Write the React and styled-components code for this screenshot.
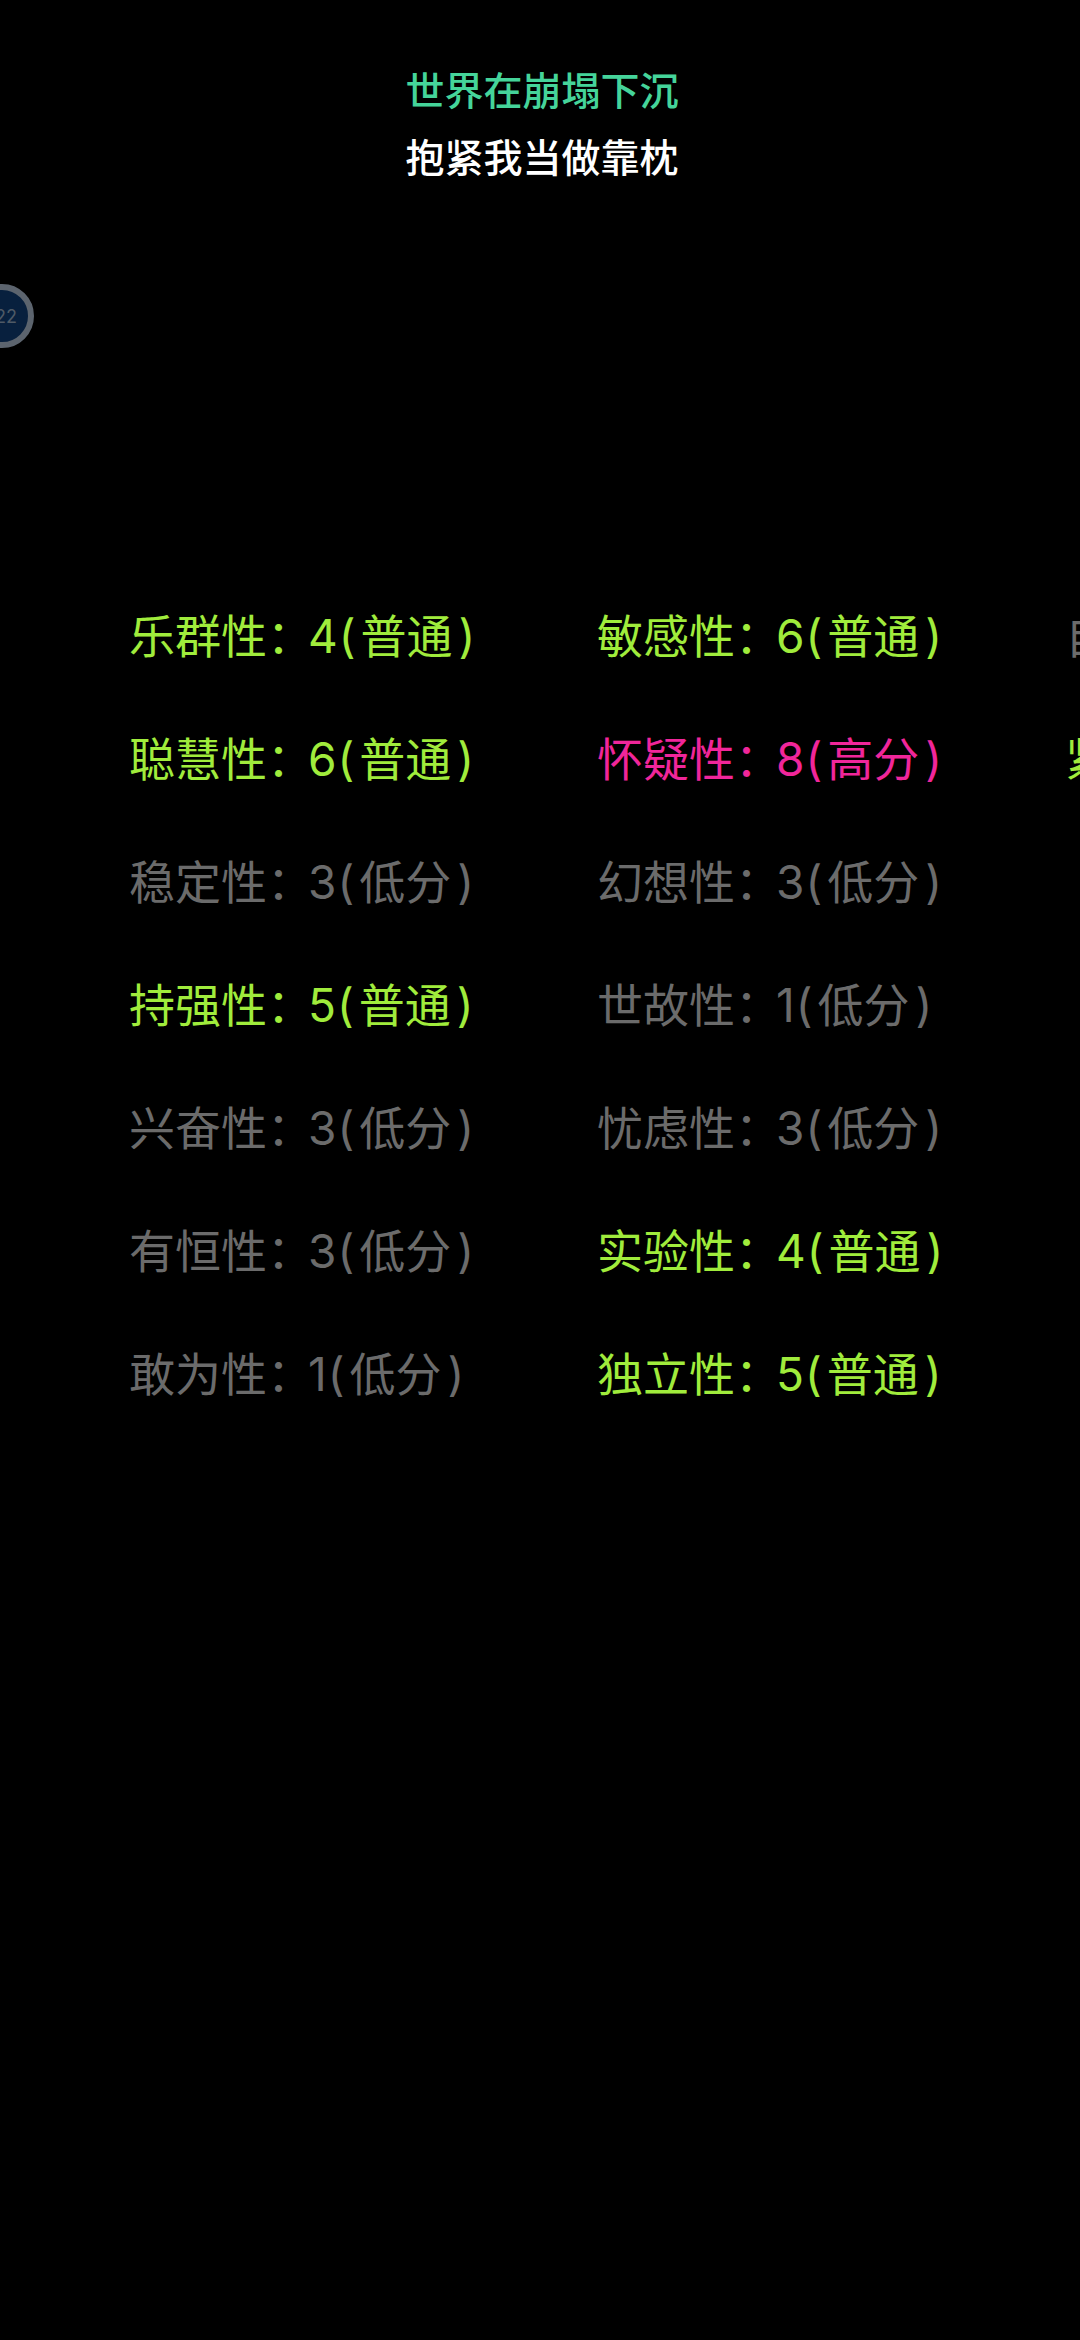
import React from "react";
import styled, { createGlobalStyle } from "styled-components";

const GlobalStyle = createGlobalStyle`
  html, body {
    margin: 0;
    padding: 0;
    background: #000;
  }
  body {
    font-family: "Inter", "Noto Sans CJK SC", sans-serif;
  }
`;

const Screen = styled.div`
  position: relative;
  width: 1080px;
  height: 2340px;
  overflow: hidden;
  background: #000;
`;

const Lyrics = styled.div`
  display: flex;
  flex-direction: column;
  align-items: center;
  padding-top: 55px;
  padding-left: 4px;
  height: 575px;
  box-sizing: border-box;
  font-family: "Noto Sans CJK SC", sans-serif;
  font-size: 39px;
  font-weight: 500;
  line-height: 67px;
`;

const LyricLine = styled.div`
  color: ${(p) => p.$color};
`;

const FloatBall = styled.div`
  position: absolute;
  left: -30px;
  top: 284px;
  width: 64px;
  height: 64px;
  box-sizing: border-box;
  border-radius: 50%;
  border: 6px solid #5c646e;
  background: #08203e;
  color: #4f5a66;
  font-size: 18px;
  display: flex;
  align-items: center;
  justify-content: flex-end;
  padding-right: 11px;
`;

const Traits = styled.div`
  display: flex;
  padding-left: 129px;
`;

const TraitColumn = styled.div`
  flex: 0 0 468px;
  display: flex;
  flex-direction: column;
`;

const Trait = styled.div`
  font-size: 46px;
  line-height: 123px;
  white-space: nowrap;
  color: ${(p) => p.$color};
`;

const Colon = styled.span`
  margin-right: -5px;
`;

const OpenParen = styled.span`
  margin: 0 5px 0 1px;
`;

const CloseParen = styled.span`
  margin-left: 6px;
`;

const LEVELS = {
  low: { label: "低分", color: "#6b6b6b" },
  mid: { label: "普通", color: "#a0ec3c" },
  high: { label: "高分", color: "#f0269a" },
};

// third column runs off the screen
const COLUMNS = [
  [
    ["乐群性", 4, "mid"],
    ["聪慧性", 6, "mid"],
    ["稳定性", 3, "low"],
    ["持强性", 5, "mid"],
    ["兴奋性", 3, "low"],
    ["有恒性", 3, "low"],
    ["敢为性", 1, "low"],
  ],
  [
    ["敏感性", 6, "mid"],
    ["怀疑性", 8, "high"],
    ["幻想性", 3, "low"],
    ["世故性", 1, "low"],
    ["忧虑性", 3, "low"],
    ["实验性", 4, "mid"],
    ["独立性", 5, "mid"],
  ],
  [
    ["自律性", 3, "low"],
    ["紧张性", 5, "mid"],
  ],
];

const App = () => {
  return (
    <Screen>
      <GlobalStyle />
      <Lyrics>
        <LyricLine $color="#45d49a">世界在崩塌下沉</LyricLine>
        <LyricLine $color="#ffffff">抱紧我当做靠枕</LyricLine>
      </Lyrics>
      <FloatBall>22</FloatBall>
      <Traits>
        {COLUMNS.map((column, c) => (
          <TraitColumn key={c}>
            {column.map(([name, score, level]) => (
              <Trait key={name} $color={LEVELS[level].color}>
                {name}
                <Colon>：</Colon>
                {score}
                <OpenParen>(</OpenParen>
                {LEVELS[level].label}
                <CloseParen>)</CloseParen>
              </Trait>
            ))}
          </TraitColumn>
        ))}
      </Traits>
    </Screen>
  );
};

export default App;
